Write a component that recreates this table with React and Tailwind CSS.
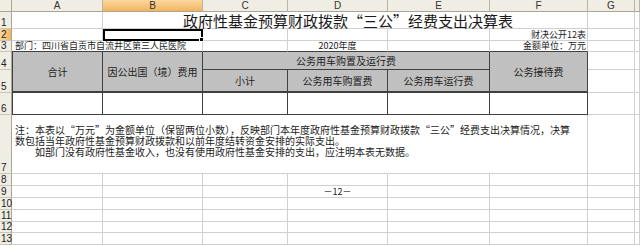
import React from 'react';

const LIGHT = 'border-r border-b border-r-[#d0d0d0] border-b-[#d0d0d0]';
const cjk = "font-['Noto_Sans_CJK_SC','Liberation_Sans',sans-serif]";
const latin = "font-['Liberation_Sans',sans-serif]";

const Cell = ({ b = LIGHT, className = '', children }) => (
  <div className={`${b} ${className}`}>{children}</div>
);

const ColHead = ({ label, active }) => (
  <div
    className={`flex items-center justify-center border-r border-b border-r-[#b8b5a6] border-b-[#a9a696] text-[10px] leading-none text-[#333] ${latin} ${
      active ? 'bg-gradient-to-b from-[#fbd8a0] to-[#f4b45c]' : 'bg-[#efede4]'
    }`}
  >
    {label}
  </div>
);

const RowHead = ({ n, active }) => (
  <div
    className={`flex items-end justify-start pl-px border-r border-b border-r-[#a9a696] border-b-[#c9c6b8] text-[10px] leading-[11px] text-[#222] ${latin} ${
      active ? 'bg-gradient-to-r from-[#fbd8a0] to-[#f4b45c]' : 'bg-[#efede4]'
    }`}
  >
    {n}
  </div>
);

const DARK = 'border-[#404040]';

export default function App() {
  return (
    <div className={`w-[640px] h-[246px] overflow-hidden bg-white ${cjk}`}>
      <div className="grid grid-cols-[12px_91px_100px_85px_100px_102px_98px_47px_5px] grid-rows-[12px_17px_12px_11px_18px_23px_22px_59px_12px_12px_12px_12px_11px_12px]">
        {/* column headers */}
        <div className="bg-[#efede4] border-r border-b border-r-[#a9a696] border-b-[#a9a696]" />
        <ColHead label="A" />
        <ColHead label="B" active />
        <ColHead label="C" />
        <ColHead label="D" />
        <ColHead label="E" />
        <ColHead label="F" />
        <ColHead label="G" />
        <ColHead label="" />

        {/* row 1 */}
        <RowHead n="1" />
        <Cell />
        <Cell className="col-span-5 flex items-end justify-center pl-[6px] text-[15px] leading-[15px] text-[#1a1a1a] whitespace-nowrap">
          政府性基金预算财政拨款“三公”经费支出决算表
        </Cell>
        <Cell />
        <Cell />

        {/* row 2 */}
        <RowHead n="2" active />
        <Cell />
        <div className="relative border-2 border-black">
          <div className="absolute -right-[3px] -bottom-[3px] w-[5px] h-[5px] bg-black border border-white" />
        </div>
        <Cell />
        <Cell />
        <Cell />
        <Cell className="flex items-end justify-end pr-px text-[9px] leading-[10px] text-[#222] whitespace-nowrap">
          财决公开12表
        </Cell>
        <Cell />
        <Cell />

        {/* row 3 */}
        <RowHead n="3" />
        <Cell
          b="border-r border-b border-r-[#d0d0d0] border-b-[#404040]"
          className="col-span-2 flex items-end pl-[3px] text-[9px] leading-[10px] text-[#222] whitespace-nowrap"
        >
          部门：四川省自贡市自流井区第三人民医院
        </Cell>
        <Cell b="border-r border-b border-r-[#d0d0d0] border-b-[#404040]" />
        <Cell
          b="border-r border-b border-r-[#d0d0d0] border-b-[#404040]"
          className="flex items-end justify-center text-[9px] leading-[10px] text-[#222] whitespace-nowrap"
        >
          2020年度
        </Cell>
        <Cell b="border-r border-b border-r-[#d0d0d0] border-b-[#404040]" />
        <Cell
          b="border-r border-b border-r-[#d0d0d0] border-b-[#404040]"
          className="flex items-end justify-end pr-px text-[9px] leading-[10px] text-[#222] whitespace-nowrap"
        >
          金额单位：万元
        </Cell>
        <Cell />
        <Cell />

        {/* row 4 */}
        <RowHead n="4" />
        <Cell
          b={`border-l border-r border-b-2 ${DARK}`}
          className="row-span-2 bg-[#c0c0c0] flex items-center justify-center text-[10px] text-[#222]"
        >
          合计
        </Cell>
        <Cell
          b={`border-r border-b-2 ${DARK}`}
          className="row-span-2 bg-[#c0c0c0] flex items-center justify-center text-[10px] text-[#222] whitespace-nowrap"
        >
          因公出国（境）费用
        </Cell>
        <Cell
          b={`border-r border-b ${DARK}`}
          className="col-span-3 bg-[#c0c0c0] flex items-center justify-center text-[10px] text-[#222] whitespace-nowrap"
        >
          公务用车购置及运行费
        </Cell>
        <Cell
          b={`border-r border-b-2 ${DARK}`}
          className="row-span-2 bg-[#c0c0c0] flex items-center justify-center text-[10px] text-[#222]"
        >
          公务接待费
        </Cell>
        <Cell />
        <Cell />

        {/* row 5 */}
        <RowHead n="5" />
        <Cell
          b={`border-r border-b-2 ${DARK}`}
          className="bg-[#c0c0c0] flex items-center justify-center text-[10px] text-[#222]"
        >
          小计
        </Cell>
        <Cell
          b={`border-r border-b-2 ${DARK}`}
          className="bg-[#c0c0c0] flex items-center justify-center text-[10px] text-[#222] whitespace-nowrap"
        >
          公务用车购置费
        </Cell>
        <Cell
          b={`border-r border-b-2 ${DARK}`}
          className="bg-[#c0c0c0] flex items-center justify-center text-[10px] text-[#222] whitespace-nowrap"
        >
          公务用车运行费
        </Cell>
        <Cell />
        <Cell />

        {/* row 6 */}
        <RowHead n="6" />
        <Cell b={`border-l border-r border-b ${DARK}`} />
        <Cell b={`border-r border-b ${DARK}`} />
        <Cell b={`border-r border-b ${DARK}`} />
        <Cell b={`border-r border-b ${DARK}`} />
        <Cell b={`border-r border-b ${DARK}`} />
        <Cell b={`border-r border-b ${DARK}`} />
        <Cell />
        <Cell />

        {/* row 7 */}
        <RowHead n="7" />
        <Cell className="col-span-6 pt-[9px] pl-[3px] text-[10px] leading-[11px] text-[#222] whitespace-nowrap">
          <div>注：本表以“万元”为金额单位（保留两位小数），反映部门本年度政府性基金预算财政拨款“三公”经费支出决算情况，决算</div>
          <div>数包括当年政府性基金预算财政拨款和以前年度结转资金安排的实际支出。</div>
          <div>　　如部门没有政府性基金收入，也没有使用政府性基金安排的支出，应注明本表无数据。</div>
        </Cell>
        <Cell />
        <Cell />

        {/* rows 8-13 */}
        {[8, 9, 10, 11, 12, 13].map((n) => (
          <React.Fragment key={n}>
            <RowHead n={String(n)} />
            <Cell />
            <Cell />
            <Cell />
            <Cell className="flex items-center justify-center text-[9px] leading-none text-[#222]">
              {n === 9 ? '－12－' : ''}
            </Cell>
            <Cell />
            <Cell />
            <Cell />
            <Cell />
          </React.Fragment>
        ))}
      </div>
    </div>
  );
}
